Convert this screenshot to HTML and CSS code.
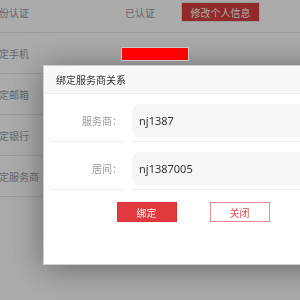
FILE: index.html
```html
<!DOCTYPE html>
<html lang="zh-CN">
<head>
    <meta charset="UTF-8">
    <meta name="viewport" content="width=device-width, initial-scale=1.0">
    <title>账户设置</title>
    <link rel="stylesheet" href="styles.css">
</head>
<body>
    <div class="account-list">
        <div class="row">
            <div class="row-label">身份认证</div>
            <div class="row-value">已认证</div>
            <div class="row-action"><button class="btn-edit">修改个人信息</button></div>
        </div>
        <div class="row">
            <div class="row-label">绑定手机</div>
            <div class="row-value"><span class="phone-mask"></span></div>
        </div>
        <div class="row">
            <div class="row-label">绑定邮箱</div>
        </div>
        <div class="row">
            <div class="row-label">绑定银行</div>
        </div>
        <div class="row">
            <div class="row-label">绑定服务商</div>
        </div>
    </div>

    <div class="mask"></div>

    <div class="dialog">
        <div class="dialog-title">绑定服务商关系</div>
        <div class="dialog-body">
            <div class="form-row">
                <div class="form-label">服务商：</div>
                <div class="form-field"><div class="field-box">nj1387</div></div>
            </div>
            <div class="form-row">
                <div class="form-label">居间：</div>
                <div class="form-field"><div class="field-box">nj1387005</div></div>
            </div>
            <div class="dialog-actions">
                <button class="btn btn-primary">绑定</button>
                <button class="btn btn-outline">关闭</button>
            </div>
        </div>
    </div>
</body>
</html>
```

FILE: styles.css
```css
body {
    margin: 0;
    background-color: #ffffff;
    font-family: "Noto Sans CJK SC", "Noto Sans", sans-serif;
    font-size: 10px;
    color: #999;
    overflow: hidden;
}

.account-list {
    margin-top: -8px;
}

.row {
    display: flex;
    align-items: center;
    height: 40px;
    border-bottom: 1px solid #e6e6e6;
}

.row-label {
    width: 131px;
    margin-left: -11px;
    flex-shrink: 0;
}

.row-value {
    width: 56px;
    padding-left: 5px;
    display: flex;
    align-items: center;
}

.btn-edit {
    width: 79px;
    height: 20px;
    border: 1px solid #e8e8e8;
    background-color: #d9403f;
    color: #fff;
    font-family: inherit;
    font-size: 10px;
    padding: 0;
}

.phone-mask {
    position: relative;
    z-index: 3;
    display: block;
    flex-shrink: 0;
    width: 66px;
    height: 12px;
    margin-left: -4px;
    margin-top: 2px;
    background-color: #ff0000;
    border: 1px solid #c8c8c8;
}

.mask {
    position: fixed;
    top: 0;
    left: 0;
    right: 0;
    bottom: 0;
    background-color: rgba(0, 0, 0, 0.33);
    z-index: 1;
}

.dialog {
    position: absolute;
    top: 65px;
    left: 43px;
    width: 298px;
    height: 198px;
    background-color: #fff;
    border: 1px solid #d0d0d0;
    box-shadow: 0 3px 30px rgba(0, 0, 0, 0.4);
    z-index: 2;
}

.dialog-title {
    height: 27px;
    line-height: 27px;
    padding-left: 12px;
    background-color: #f8f8f8;
    border-bottom: 1px solid #eeeeee;
    color: #333;
    font-size: 10px;
}

.form-row {
    display: flex;
}

.form-label {
    width: 72px;
    margin-left: 6px;
    padding: 10px 3px 4px 0;
    border-bottom: 1px solid #eeeeee;
    text-align: right;
    line-height: 33px;
    color: #999;
}

.form-field {
    flex: 1;
    margin-left: 7px;
    padding: 10px 0 4px;
    border-bottom: 1px solid #eeeeee;
}

.field-box {
    height: 33px;
    line-height: 33px;
    padding-left: 7px;
    background-color: #f5f5f5;
    border-radius: 8px 0 0 8px;
    color: #333;
    font-family: "Noto Sans", sans-serif;
    font-size: 11px;
}

.dialog-actions {
    display: flex;
    justify-content: center;
    gap: 33px;
    margin-top: 12px;
}

.btn {
    width: 60px;
    height: 20px;
    padding: 0;
    font-family: inherit;
    font-size: 10px;
}

.btn-primary {
    background-color: #e03a3e;
    border: 1px solid #d83236;
    color: #fff;
}

.btn-outline {
    background-color: #fff;
    border: 1px solid #ee8a8c;
    color: #e04a4e;
}
```
